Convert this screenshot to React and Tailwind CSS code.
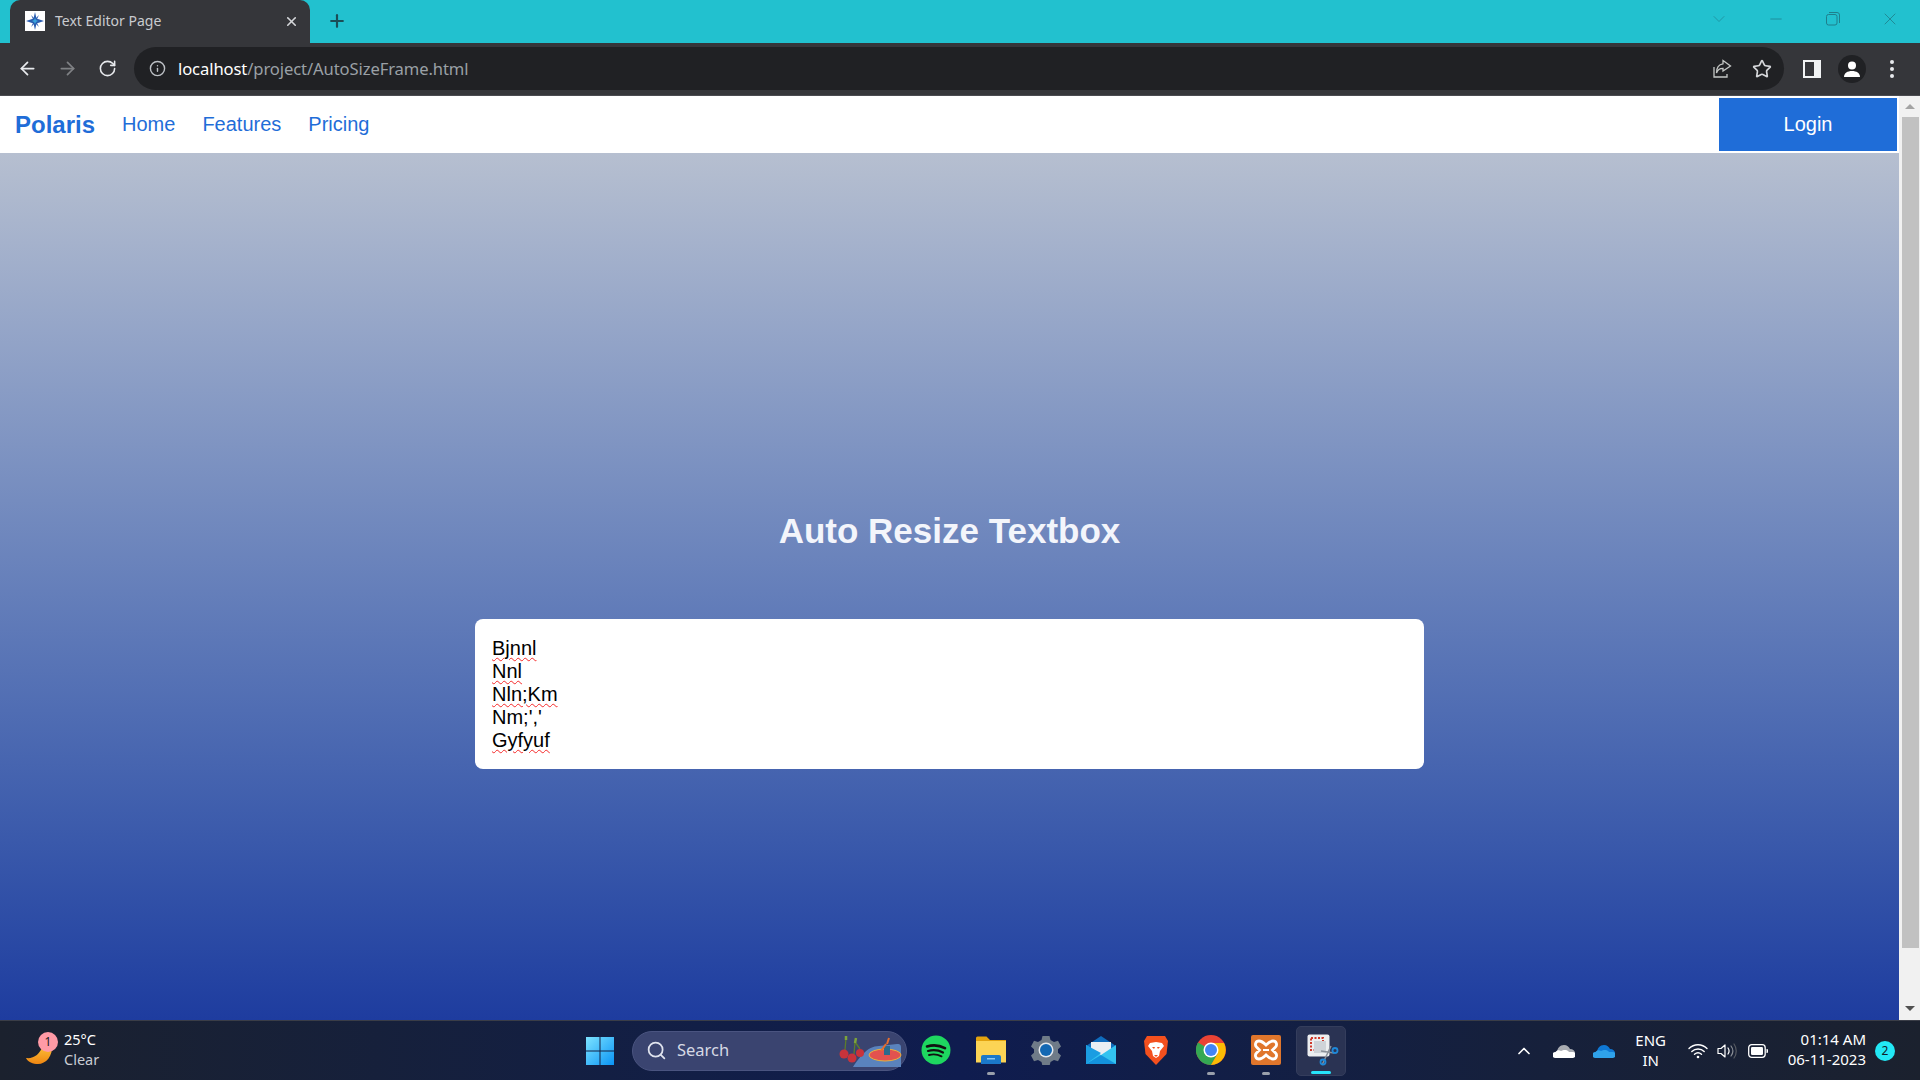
import React from "react";
import { ArrowLeft, ArrowRight, RotateCw, Info, Star, Plus, X, ChevronDown, ChevronUp, Minus, Search } from "lucide-react";

const seg = { fontFamily: '"Noto Sans", "Open Sans", sans-serif' };
const arial = { fontFamily: '"Liberation Sans", Arial, sans-serif' };

function Favicon() {
  return (
    <svg width="20" height="20" viewBox="0 0 20 20" className="shrink-0">
      <rect width="20" height="20" fill="#fff" />
      <path d="M10 1 L11.500 7.500 L19 10 L11.500 12.500 L10 19 L8.500 12.500 L1 10 L8.500 7.500 Z" fill="#2a5db0" />
      <path d="M14 4 L11 10 L14 16 L10 12 L6 16 L9 10 L6 4 L10 8 Z" fill="#2a5db0" />
      <path d="M10 7 L11 9 L13 10 L11 11 L10 13 L9 11 L7 10 L9 9 Z" fill="#38a3dc" />
    </svg>
  );
}

function Restore() {
  return (
    <svg width="14" height="14" viewBox="0 0 14 14" fill="none" stroke="#1f7f8c" strokeWidth="1">
      <rect x="0.5" y="2.5" width="10.5" height="10.5" rx="2" />
      <path d="M3 0.5h8a2.5 2.5 0 0 1 2.5 2.5v8" />
    </svg>
  );
}

function ShareIcon() {
  return (
    <svg width="20" height="20" viewBox="0 0 20 20" fill="none" stroke="#c4c7c5" strokeWidth="1.3">
      <path d="M2 8v10h13v-3" />
      <path d="M11 1.5 L18.5 7 L11 12 V9.3 C8 9.3 5.5 10.5 4.5 14 C4.5 8.5 7 5.3 11 4.8 Z" />
    </svg>
  );
}

function PanelIcon() {
  return (
    <svg width="18" height="18" viewBox="0 0 18 18">
      <rect width="18" height="18" fill="#f1f3f4" />
      <rect x="2" y="2" width="9" height="14" fill="#35363a" />
    </svg>
  );
}

function Profile() {
  return (
    <div className="w-7 h-7 rounded-full bg-[#202124] flex items-center justify-center">
      <svg width="18" height="18" viewBox="0 0 18 18" fill="#fff">
        <circle cx="9" cy="5.5" r="4" />
        <path d="M1 17c0-4 3.5-6 8-6s8 2 8 6z" />
      </svg>
    </div>
  );
}

function Kebab() {
  return (
    <div className="flex flex-col gap-[3px]">
      <span className="w-1 h-1 rounded-full bg-[#e8eaed]" />
      <span className="w-1 h-1 rounded-full bg-[#e8eaed]" />
      <span className="w-1 h-1 rounded-full bg-[#e8eaed]" />
    </div>
  );
}

function Moon() {
  return (
    <svg width="30" height="26" viewBox="0 0 30 26">
      <defs>
        <linearGradient id="moon" x1="0" y1="0" x2="0" y2="1">
          <stop offset="0" stopColor="#fcc33a" />
          <stop offset="1" stopColor="#ef8612" />
        </linearGradient>
      </defs>
      <path d="M1 18 C8 19 15 15 18 5 L27 5 C28 16 21 24 13 24 C8 24 3 22 1 18 Z" fill="url(#moon)" />
    </svg>
  );
}

function WinLogo() {
  return (
    <svg width="30" height="30" viewBox="0 0 30 30">
      <defs>
        <linearGradient id="win" x1="0" y1="0" x2="1" y2="1">
          <stop offset="0" stopColor="#7de3ff" />
          <stop offset="1" stopColor="#0a94f5" />
        </linearGradient>
      </defs>
      <path d="M1 1h13.5v13.5H1zM15.5 1H29v13.5H15.5zM1 15.5h13.5V29H1zM15.5 15.5H29V29H15.5z" fill="url(#win)" />
    </svg>
  );
}

function SearchArt() {
  return (
    <svg width="64" height="34" viewBox="0 0 64 34">
      <path d="M14 33 C20 24 28 12 40 12 L58 10 C62 10 62 12 62 14 L62 33 Z" fill="#5a83bd" />
      <ellipse cx="46" cy="21" rx="16" ry="6" fill="#e2524f" stroke="#e7b23c" strokeWidth="1" />
      <path d="M45 21V12h6v9z" fill="#2b6a8c" />
      <path d="M48 10 L50 4 M42 17 L47 10" stroke="#e66e2e" strokeWidth="2" />
      <path d="M6 16 L7 4 M15 20 L16 8 M21 15 L16 8" stroke="#5c7c2c" strokeWidth="1.300" />
      <path d="M7 6l0-4M16 9l1-5" stroke="#7da33a" strokeWidth="2.500" />
      <circle cx="5" cy="20" r="4.500" fill="#c8333b" />
      <circle cx="21" cy="19" r="4" fill="#c8333b" />
      <circle cx="13" cy="24" r="4.500" fill="#c8333b" />
    </svg>
  );
}

function Spotify() {
  return (
    <svg width="30" height="30" viewBox="0 0 30 30" fill="none">
      <circle cx="15" cy="15" r="14.5" fill="#1ed760" />
      <path d="M6 11.5c6-1.8 12.5-1.2 18 1.6" stroke="#111" strokeWidth="2.6" strokeLinecap="round" />
      <path d="M7 16c5-1.4 10.5-.9 15 1.5" stroke="#111" strokeWidth="2.2" strokeLinecap="round" />
      <path d="M8 20c4-1 8.5-.7 12.5 1.3" stroke="#111" strokeWidth="1.9" strokeLinecap="round" />
    </svg>
  );
}

function Folder() {
  return (
    <svg width="30" height="28" viewBox="0 0 30 28">
      <path d="M0 2a1.5 1.5 0 0 1 1.5-1.5h9L14 4h16v4H0z" fill="#e3a30f" />
      <path d="M0 5h30v21.500H0z" fill="#fcd455" />
      <path d="M5 21a2 2 0 0 1 2-2h16a2 2 0 0 1 2 2v7H5z" fill="#1b78c9" />
      <rect x="11" y="22" width="8" height="1.500" fill="#8cc7f2" />
    </svg>
  );
}

function Gear() {
  return (
    <svg width="30" height="30" viewBox="0 0 30 30">
      <path
        d="M11.500 1h7l1 4 3.500 2 4-1.200 3 5.700-3 2.800v3.400l3 2.800-3 5.700-4-1.200-3.500 2-1 4h-7l-1-4-3.500-2-4 1.200-3-5.700 3-2.800v-3.400l-3-2.800 3-5.700 4 1.200 3.500-2z"
        fill="#6f7b88"
      />
      <circle cx="15" cy="15" r="7.500" fill="#e5e9ee" />
      <circle cx="15" cy="15" r="6" fill="#1368b3" />
    </svg>
  );
}

function Mail() {
  return (
    <svg width="30" height="28" viewBox="0 0 30 28">
      <path d="M0 10 L15 0 L30 10 V14 H0 Z" fill="#0f6cbd" />
      <path d="M5 6h20v14H5z" fill="#e9eef3" />
      <path d="M0 9 L15 19 L30 9 V28 H0 Z" fill="#33c3f0" />
      <path d="M0 28 L15 17 L0 9 Z" fill="#1b9de2" />
      <path d="M30 28 L15 19 L0 28 Z" fill="#1492dc" />
    </svg>
  );
}

function Brave() {
  return (
    <svg width="26" height="30" viewBox="0 0 26 30">
      <path d="M4 1h18l3 5-1.500 13L13 30 2.500 19 1 6z" fill="#f4501e" />
      <path d="M7 8l6-1 6 1 2 3-4 5-1 5-3 2-3-2-1-5-4-5z" fill="#fff" />
      <path d="M9 12h3l-1 2zM17 12h-3l1 2z" fill="#f4501e" />
      <path d="M11 20h4l-2 2z" fill="#f4501e" />
    </svg>
  );
}

function Chrome() {
  return (
    <svg width="30" height="30" viewBox="0 0 30 30">
      <circle cx="15" cy="15" r="15" fill="#ea4335" />
      <path d="M15 15 L2 7.500 A15 15 0 0 0 15 30 L22 18 Z" fill="#34a853" />
      <path d="M15 8 H28 A15 15 0 0 1 15 30 L22 18 Z" fill="#fbbc04" />
      <circle cx="15" cy="15" r="7.500" fill="#fff" />
      <circle cx="15" cy="15" r="6" fill="#4285f4" />
    </svg>
  );
}

function Xampp() {
  return (
    <svg width="30" height="30" viewBox="0 0 30 30">
      <rect width="30" height="30" rx="2" fill="#e0762c" />
      <path
        d="M8 6c3 0 5 2 7 4 2-2 4-4 7-4 3.500 0 4.500 4 2.500 6l-3 3 3 3c2 2 1 6-2.500 6-3 0-5-2-7-4-2 2-4 4-7 4-3.500 0-4.500-4-2.500-6l3-3-3-3C3.500 10 4.500 6 8 6z"
        fill="none"
        stroke="#fff"
        strokeWidth="2.800"
      />
      <path d="M12 15h6" stroke="#fff" strokeWidth="2" />
    </svg>
  );
}

function Snip() {
  return (
    <svg width="32" height="32" viewBox="0 0 32 32" fill="none">
      <rect x="0.500" y="0.500" width="22" height="22" rx="2" fill="#eceef0" />
      <rect x="4" y="4" width="12" height="12" stroke="#d0392b" strokeWidth="2" strokeDasharray="2 1.500" />
      <rect x="7" y="7" width="12" height="12" fill="#cfd3d8" />
      <path d="M14 17 L27 19" stroke="#8a9099" strokeWidth="1.500" />
      <path d="M24 12 L15 31" stroke="#8a9099" strokeWidth="1.500" />
      <circle cx="28" cy="16.500" r="2.500" stroke="#1e88d8" strokeWidth="1.800" />
      <circle cx="16" cy="28" r="2.500" stroke="#1e88d8" strokeWidth="1.800" />
    </svg>
  );
}

function CloudIcon({ back, front }) {
  return (
    <svg width="22" height="14" viewBox="0 0 22 14">
      <path d="M4 9c0-5 3-8 7-8 3 0 5 2 6 4 3 0 5 2 5 4z" fill={back} />
      <path d="M2.500 14a2.500 2.500 0 0 1 0-6C4 6 6 6 8 7c2-1 6-2 8 1h3a3 3 0 0 1 1 6z" fill={front} />
    </svg>
  );
}

function Wifi() {
  return (
    <svg width="20" height="16" viewBox="0 0 20 16" fill="none" stroke="#fff" strokeWidth="1.400" strokeLinecap="round">
      <path d="M1 5.500c5-5 13-5 18 0" />
      <path d="M3.800 8.500c3.500-3.300 9-3.300 12.400 0" />
      <path d="M6.500 11.200c2-1.700 5-1.700 7 0" />
      <circle cx="10" cy="14" r="1.300" fill="#fff" stroke="none" />
    </svg>
  );
}

function Volume() {
  return (
    <svg width="20" height="16" viewBox="0 0 20 16" fill="none" strokeLinecap="round">
      <path d="M1 5.500h3L8 2v12L4 10.500H1z" stroke="#fff" strokeWidth="1.200" strokeLinejoin="round" />
      <path d="M11 5c1.300 1.800 1.300 4.200 0 6" stroke="#fff" strokeWidth="1.200" />
      <path d="M14 3c2.300 3 2.300 7 0 10" stroke="#8b8f96" strokeWidth="1.200" />
      <path d="M17 1c3 4 3 10 0 14" stroke="#565a62" strokeWidth="1.200" />
    </svg>
  );
}

function Battery() {
  return (
    <svg width="20" height="14" viewBox="0 0 20 14" fill="none">
      <rect x="0.700" y="0.700" width="16.500" height="12.600" rx="3" stroke="#fff" strokeWidth="1.300" />
      <rect x="3" y="3" width="12" height="8" rx="1.200" fill="#fff" />
      <path d="M18.500 5h.5a1 1 0 0 1 1 1v2a1 1 0 0 1-1 1h-.5z" fill="#fff" />
    </svg>
  );
}

function TaskItem({ children, dot }) {
  return (
    <div className="relative w-[55px] h-[50px] flex items-center justify-center pb-[2px]">
      {children}
      {dot && <span className="absolute bottom-[1px] left-[23.500px] w-2 h-[3px] rounded-full bg-[#9aa0ab]" />}
    </div>
  );
}

const lines = ["Bjnnl", "Nnl", "Nln;Km", "Nm;','", "Gyfyuf"];

export default function App() {
  return (
    <div className="w-[1920px] h-[1080px] overflow-hidden flex flex-col bg-white" style={arial}>
      {/* tab strip */}
      <div className="h-[43px] shrink-0 bg-[#22c1cf] flex items-end pl-[10px]">
        <div className="w-[300px] h-[43px] bg-[#35363a] rounded-t-[10px] flex items-center pl-[15px] pr-[11px] pb-[1px] text-[#c9cbcf] text-[14px]" style={seg}>
          <Favicon />
          <span className="ml-[10px] flex-1 -mt-[1px]">Text Editor Page</span>
          <X size={15} strokeWidth={2.500} color="#d5d7da" />
        </div>
        <div className="h-[43px] flex items-center ml-[17px] pb-[1px]">
          <Plus size={20} strokeWidth={2.600} color="#1b4e57" />
        </div>
        <div className="ml-auto h-[43px] flex items-center pb-[5px]">
          <div className="w-[57px] flex justify-center"><ChevronDown size={20} strokeWidth={1} color="#1f8f9d" /></div>
          <div className="w-[57px] flex justify-center"><Minus size={18} strokeWidth={1} color="#1f7f8c" /></div>
          <div className="w-[57px] flex justify-center"><Restore /></div>
          <div className="w-[57px] flex justify-center mr-[2px]"><X size={20} strokeWidth={1} color="#1f7f8c" /></div>
        </div>
      </div>

      {/* toolbar */}
      <div className="h-[53px] shrink-0 bg-[#35363a] border-b border-b-[#4a4b50] flex items-center pl-[17px] pb-[1px]">
        <ArrowLeft size={21} color="#e8eaed" strokeWidth={2} />
        <ArrowRight size={21} color="#7f8184" strokeWidth={2} className="ml-[19px]" />
        <RotateCw size={19} color="#e8eaed" strokeWidth={2} className="ml-[20px]" />
        <div className="ml-[17px] w-[1650px] h-[43px] rounded-full bg-[#202124] flex items-center pl-[15px] pr-[12px]">
          <Info size={17} color="#bdc1c6" strokeWidth={2} />
          <span className="ml-[12px] mt-[2px] text-[16.600px] tracking-[-0.100px] text-[#e8eaed]" style={seg}>
            <span className="text-white">localhost</span>
            <span className="text-[#9aa0a6]">/project/AutoSizeFrame.html</span>
          </span>
          <div className="ml-auto flex items-center gap-[20px]">
            <ShareIcon />
            <Star size={20} color="#d5d7da" strokeWidth={2} />
          </div>
        </div>
        <div className="ml-[19px]"><PanelIcon /></div>
        <div className="ml-[17px]"><Profile /></div>
        <div className="ml-[24px]"><Kebab /></div>
      </div>

      {/* page */}
      <div className="flex-1 min-h-0 flex">
        <div className="flex-1 min-w-0 flex flex-col">
          <nav className="h-[57px] shrink-0 bg-white flex items-center pl-[15px] pr-[2px] text-[#1f6dd8]">
            <span className="text-[24px] font-bold">Polaris</span>
            <a className="ml-[27px] text-[20px] -mt-[2px]">Home</a>
            <a className="ml-[27px] text-[20px] -mt-[2px]">Features</a>
            <a className="ml-[27px] text-[20px] -mt-[2px]">Pricing</a>
            <button className="ml-auto w-[178px] h-[53px] bg-[#1f6dd8] text-white text-[20px] pb-[2px]">Login</button>
          </nav>
          <main className="flex-1 min-h-0 bg-gradient-to-b from-[#b6bfd0] to-[#1e3c9f] flex flex-col items-center pt-[357px]">
            <h1 className="text-[35px] leading-[42px] font-bold text-[#f3f5fb]">Auto Resize Textbox</h1>
            <div className="mt-[67px] w-[949px] h-[150px] bg-white rounded-[8px] px-[17px] pt-[18px] text-[20px] leading-[23px] text-black">
              {lines.map((l) => (
                <div key={l}>
                  {l === "Nm;','" ? l : <span className="underline decoration-wavy decoration-[#f52a2a] decoration-[1.200px] underline-offset-[2px]">{l}</span>}
                </div>
              ))}
            </div>
          </main>
        </div>
        <div className="w-[21px] shrink-0 bg-[#f1f1f1] flex flex-col items-center pl-[1px]">
          <div className="h-[21px] flex items-center justify-center">
            <span className="w-0 h-0 border-x-[5px] border-x-transparent border-b-[5px] border-b-[#a3a3a3]" />
          </div>
          <div className="w-[17px] h-[831px] bg-[#c1c1c1]" />
          <div className="flex-1 flex items-end justify-center pb-[9px]">
            <span className="w-0 h-0 border-x-[5px] border-x-transparent border-t-[5px] border-t-[#505050]" />
          </div>
        </div>
      </div>

      {/* taskbar */}
      <div className="h-[60px] shrink-0 border-t border-t-[#3a3d47] bg-gradient-to-r from-[#1b212e] via-[#0f1c4f] to-[#1b212e] flex items-center text-white" style={seg}>
        <div className="w-[585px] shrink-0 pl-[25px] flex items-center">
          <div className="relative w-[38px] h-[30px] flex items-end">
            <Moon />
            <span className="absolute left-[13px] -top-[4px] w-5 h-5 rounded-full bg-[#ff9aa6] text-[#1a1a1a] text-[12px] leading-5 text-center">1</span>
          </div>
          <div className="ml-[1px] -mt-[3px] text-[14.500px] leading-[20px]">
            <div>25°C</div>
            <div className="text-[#c9ccd3]">Clear</div>
          </div>
        </div>
        <div className="w-[30px] flex justify-center"><WinLogo /></div>
        <div className="ml-[17px] w-[275px] h-[40px] rounded-full bg-[#3a4470] border border-[#4a5480] flex items-center pl-[13px] relative">
          <Search size={21} strokeWidth={2} color="#dfe3ee" />
          <span className="ml-[10px] text-[16.500px] text-[#d6d9e4]">Search</span>
          <div className="absolute right-[3px] top-[2px]"><SearchArt /></div>
        </div>
        <div className="ml-[1px] flex items-center">
          <TaskItem><Spotify /></TaskItem>
          <TaskItem dot><Folder /></TaskItem>
          <TaskItem><Gear /></TaskItem>
          <TaskItem><Mail /></TaskItem>
          <TaskItem><Brave /></TaskItem>
          <TaskItem dot><Chrome /></TaskItem>
          <TaskItem dot><Xampp /></TaskItem>
          <div className="relative w-[50px] h-[50px] ml-[3px] rounded-[5px] bg-[#2a3353] border border-[#343d5c] flex items-center justify-center">
            <div className="mb-[2px] ml-[3px]"><Snip /></div>
            <span className="absolute bottom-[1px] left-[14px] w-5 h-[3px] rounded-full bg-[#27e4fb]" />
          </div>
        </div>
        <div className="ml-auto flex items-center pr-[25px]">
          <ChevronUp size={20} strokeWidth={2} color="#fff" />
          <div className="ml-[19px]"><CloudIcon back="#a8abb1" front="#fff" /></div>
          <div className="ml-[18px]"><CloudIcon back="#0f78d4" front="#2fa2ea" /></div>
          <div className="ml-[20px] w-[32px] text-center text-[15px] leading-[20px] -mt-[2px]">
            <div>ENG</div>
            <div>IN</div>
          </div>
          <div className="ml-[21px]"><Wifi /></div>
          <div className="ml-[9px]"><Volume /></div>
          <div className="ml-[11px]"><Battery /></div>
          <div className="ml-[20px] text-right text-[15px] leading-[20px] -mt-[3px]">
            <div>01:14 AM</div>
            <div>06-11-2023</div>
          </div>
          <span className="ml-[9px] w-5 h-5 rounded-full bg-[#22e8f5] text-[#10202a] text-[12px] leading-5 text-center">2</span>
        </div>
      </div>
    </div>
  );
}
